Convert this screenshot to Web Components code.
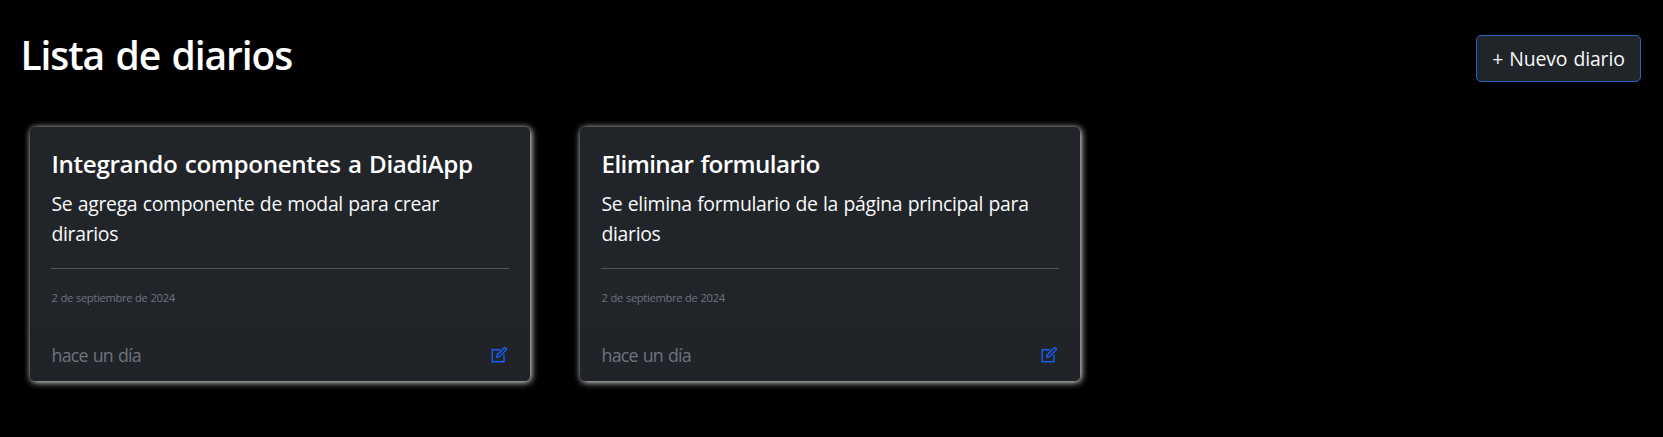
<!DOCTYPE html>
<html lang="es">
<head>
<meta charset="utf-8">
<title>Diarios</title>
<style>
html,body{margin:0;background:#000;height:100%;overflow:hidden}
body{font-family:"Open Sans","Noto Sans",sans-serif;color:#fff}
</style>
</head>
<body>
<diary-page></diary-page>
<script>
class DiaryButton extends HTMLElement{
  constructor(){
    super();
    this.attachShadow({mode:'open'}).innerHTML=`<style>
:host{display:block}
button{display:block;box-sizing:border-box;width:165px;height:47px;margin:0;padding:1px 0 0;border:1px solid #2a62c4;border-radius:5px;background:#212529;color:#f8f9fa;font:400 19.4px/30px "Open Sans","Noto Sans",sans-serif;letter-spacing:-.14px;word-spacing:1.2px;white-space:nowrap}
</style><button type="button"><slot></slot></button>`;
  }
}
class DiaryCard extends HTMLElement{
  constructor(){
    super();
    this.attachShadow({mode:'open'}).innerHTML=`<style>
:host{display:flex;flex-direction:column;box-sizing:border-box;width:500px;height:254px;border-radius:5px;background:#212529;box-shadow:1px 1px 7px 0 #fff}
.body{flex:1;padding:21px 21px 0 21.5px}
h5{margin:1px 0 10px;font-size:24.2px;line-height:30px;font-weight:600;letter-spacing:var(--title-ls,-.34px);word-spacing:1.4px;white-space:nowrap}
p{margin:0;font-size:19.4px;line-height:30px;color:#f8f9fa;letter-spacing:-.32px;word-spacing:.7px;white-space:nowrap}
hr{margin:19px 0 0 -.5px;border:0;height:1px;background:#505458}
small{display:block;margin-top:20px;font-size:11.2px;line-height:17px;color:#6c757d;letter-spacing:-.34px;word-spacing:.4px}
footer{display:flex;align-items:center;justify-content:space-between;box-sizing:border-box;height:52px;padding:0 22px 1px 21.5px;border-top:1px solid #1c2023;background:#202328;border-radius:0 0 5px 5px;color:#6c757d;font-size:17.8px;letter-spacing:-.74px;word-spacing:1px}
svg{display:block;width:18px;height:18px}
</style>
<div class="body"><h5><slot name="title"></slot></h5><p><slot></slot></p><hr><small><slot name="date"></slot></small></div>
<footer><slot name="ago"></slot><svg viewBox="0 0 18 18" fill="none" stroke="#1560f2" stroke-width="1.4"><path d="M10.3 3.7H2.2v12.1H14V8.6"/><path d="M6.7 11.3l.4-2.4L14.3 1.7q.5-.5 1 0l1 1q.5.5 0 1L9.1 10.9z"/></svg></footer>`;
  }
}
class DiaryPage extends HTMLElement{
  constructor(){
    super();
    this.attachShadow({mode:'open'}).innerHTML=`<style>
:host{display:block}
header{display:flex;justify-content:space-between;align-items:flex-start;padding:35px 22px 0 20.5px}
h1{margin:-4px 0 0;font-size:39px;line-height:48px;font-weight:600;letter-spacing:-1.1px;word-spacing:2.4px;white-space:nowrap}
main{display:flex;gap:50px;padding:45px 0 0 30px}
.short{--title-ls:-.6px}
</style>
<header><h1>Lista de diarios</h1><diary-button>+ Nuevo diario</diary-button></header>
<main>
<diary-card><span slot="title">Integrando componentes a DiadiApp</span>Se agrega componente de modal para crear<br>dirarios<span slot="date">2 de septiembre de 2024</span><span slot="ago">hace un día</span></diary-card>
<diary-card class="short"><span slot="title">Eliminar formulario</span>Se elimina formulario de la página principal para<br>diarios<span slot="date">2 de septiembre de 2024</span><span slot="ago">hace un día</span></diary-card>
</main>`;
  }
}
customElements.define('diary-button',DiaryButton);
customElements.define('diary-card',DiaryCard);
customElements.define('diary-page',DiaryPage);
</script>
</body>
</html>
